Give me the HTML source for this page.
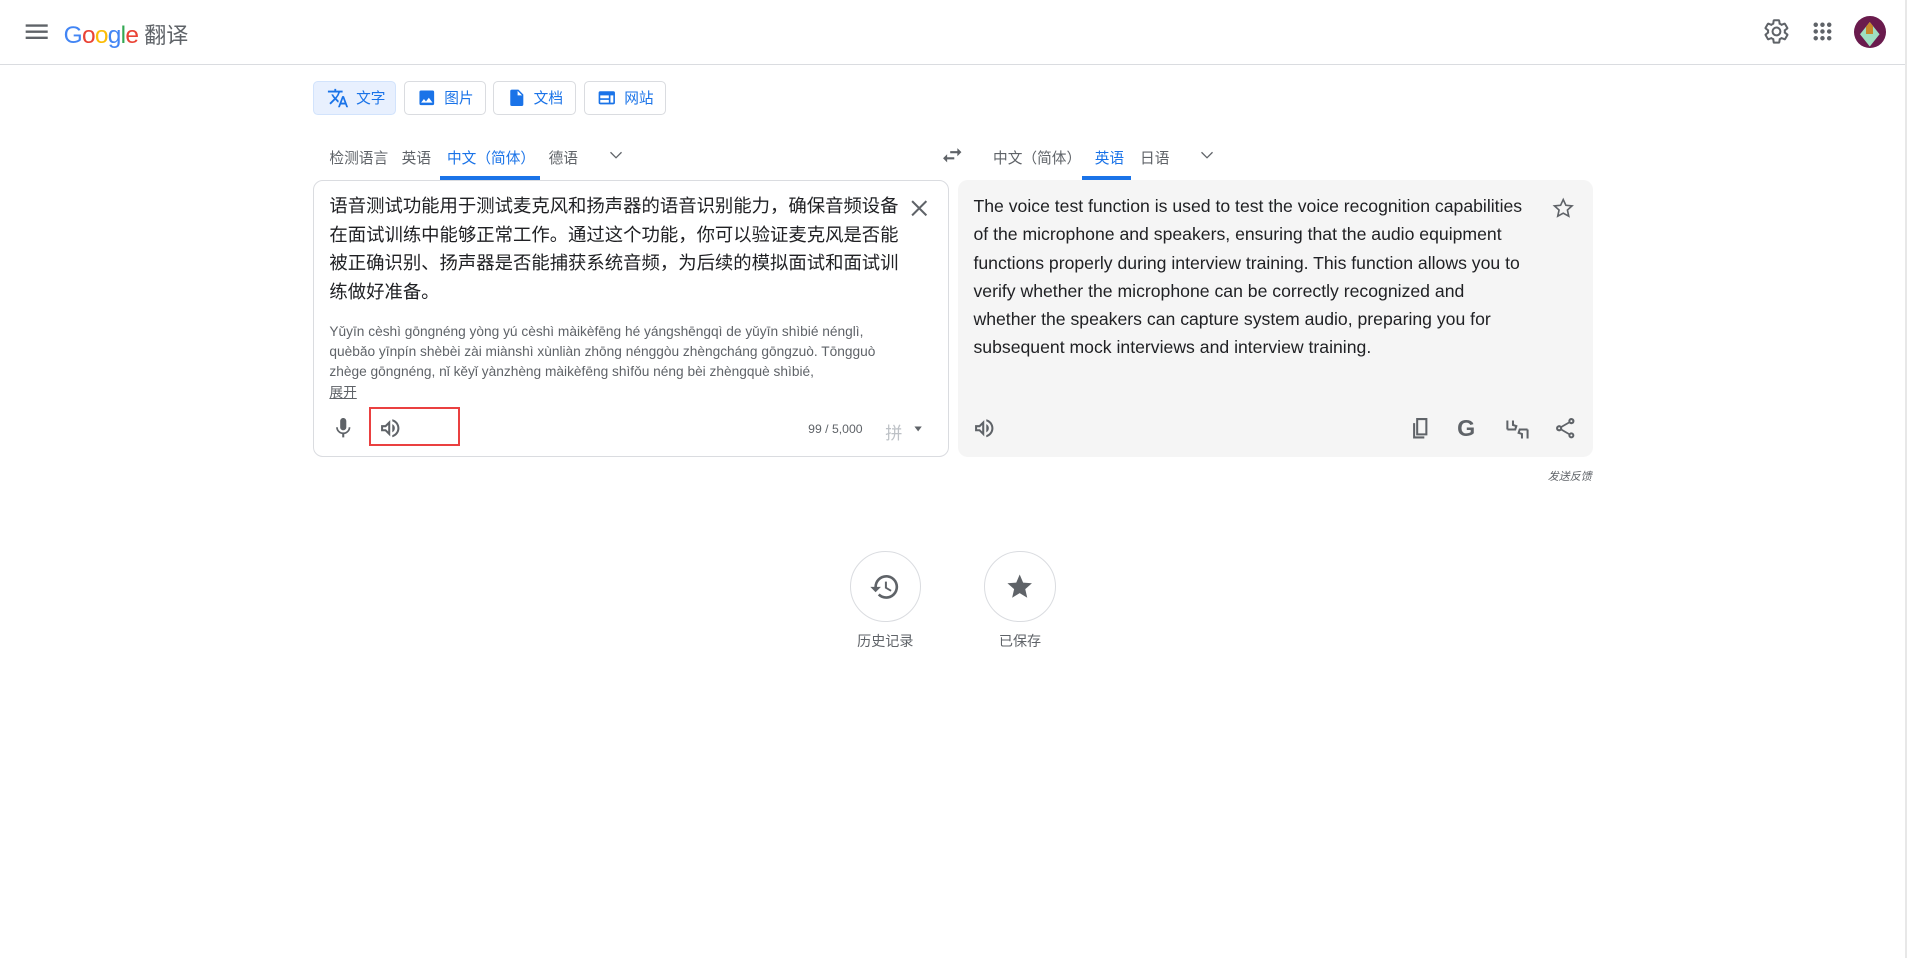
<!DOCTYPE html>
<html><head><meta charset="utf-8"><style>
html{zoom:1.22449}
body{margin:0;width:1568px;height:782px;overflow:hidden;background:#fff;font-family:"Liberation Sans","Noto Sans CJK SC",sans-serif;color:#3c4043;position:relative}
.a{position:absolute}
svg{display:block}
.tab{position:absolute;top:66px;height:28px;border:1px solid #dadce0;border-radius:4px;box-sizing:border-box;font-size:12px;color:#1a73e8;display:flex;align-items:center;padding-left:10px;gap:6px}
.lang{position:absolute;top:120px;font-size:12px;color:#5f6368}
.ic{fill:#5f6368}
</style></head><body>
<div class="a" style="left:0;top:52px;width:1557px;height:1px;background:#dadce0"></div>
<div class="a" style="left:1556px;top:0;width:1px;height:782px;background:#e8e8e8"></div>
<svg class="a" style="left:18px;top:14px" width="24" height="24" viewBox="0 0 24 24"><path class="ic" d="M3 18h18v-2H3v2zm0-5h18v-2H3v2zm0-7v2h18V6H3z"/></svg>
<div class="a" style="left:52px;top:15px;font-size:20px;letter-spacing:-0.6px"><span style="color:#4285f4">G</span><span style="color:#ea4335">o</span><span style="color:#fbbc05">o</span><span style="color:#4285f4">g</span><span style="color:#34a853">l</span><span style="color:#ea4335">e</span> <span style="color:#5f6368;font-size:18px;letter-spacing:0">翻译</span></div>
<svg class="a" style="left:1440px;top:15px" width="22" height="22" viewBox="0 0 24 24"><path d="M19.4 13c.04-.3.06-.6.06-1s-.02-.7-.06-1l2.1-1.6c.2-.15.24-.42.12-.64l-2-3.46c-.12-.22-.39-.3-.6-.22l-2.5 1c-.52-.4-1.080-.73-1.7-.98l-.37-2.650A.49.49 0 0014 2h-4c-.25 0-.46.18-.5.42l-.37 2.65c-.62.25-1.18.59-1.7.98l-2.5-1c-.22-.08-.48 0-.6.22l-2 3.46c-.13.22-.07.49.12.64L4.57 11c-.04.3-.07.65-.07 1s.03.7.07 1l-2.1 1.6c-.2.15-.25.42-.12.64l2 3.46c.12.22.39.3.6.22l2.5-1c.52.4 1.08.73 1.7.98l.37 2.65c.04.24.25.42.5.42h4c.25 0 .46-.18.5-.42l.37-2.65c.62-.25 1.18-.59 1.7-.98l2.5 1c.22.08.48 0 .6-.22l2-3.46c.12-.22.07-.49-.12-.64L19.4 13zM12 15.5A3.5 3.5 0 1112 8.5a3.5 3.5 0 010 7z" fill="none" stroke="#5f6368" stroke-width="1.8"/></svg>
<svg class="a" style="left:1477px;top:15px" width="22" height="22" viewBox="0 0 24 24"><path class="ic" d="M6 8a2 2 0 100-4 2 2 0 000 4zm6 12a2 2 0 100-4 2 2 0 000 4zm-6 0a2 2 0 100-4 2 2 0 000 4zm0-6a2 2 0 100-4 2 2 0 000 4zm6 0a2 2 0 100-4 2 2 0 000 4zm4-8a2 2 0 104 0 2 2 0 00-4 0zm-4 2a2 2 0 100-4 2 2 0 000 4zm6 6a2 2 0 100-4 2 2 0 000 4zm0 6a2 2 0 100-4 2 2 0 000 4z"/></svg>
<div class="a" style="left:1514px;top:13px;width:26px;height:26px;border-radius:50%;background:#6a1b4d;overflow:hidden"><div style="margin:3px 5px;width:16px;height:20px;background:#9fe0c0;clip-path:polygon(50% 0,100% 50%,50% 100%,0 50%)"><div style="margin:5px 5px;width:6px;height:10px;background:#c8892b"></div></div></div>

<div class="tab" style="left:256px;width:67px;background:#e8f0fe;border-color:#d2e3fc"><svg width="18" height="18" viewBox="0 0 24 24"><path fill="#1a73e8" d="M12.87 15.07l-2.54-2.51.03-.03A17.5 17.5 0 0014.07 6H17V4h-7V2H8v2H1v2h11.17C11.5 7.92 10.44 9.75 9 11.35 8.07 10.32 7.3 9.190 6.69 8h-2c.73 1.63 1.73 3.17 2.98 4.56l-5.09 5.02L4 19l5-5 3.11 3.11.76-2.04zM18.5 10h-2L12 22h2l1.12-3h4.75L21 22h2l-4.5-12zm-2.62 7l1.62-4.33L19.12 17h-3.24z"/></svg>文字</div>
<div class="tab" style="left:330px;width:67px"><svg width="16" height="16" viewBox="0 0 24 24"><path fill="#1a73e8" d="M21 19V5a2 2 0 00-2-2H5a2 2 0 00-2 2v14a2 2 0 002 2h14a2 2 0 002-2zM8.5 13.5l2.5 3 3.5-4.5 4.5 6H5l3.5-4.5z"/></svg>图片</div>
<div class="tab" style="left:403px;width:67px"><svg width="16" height="16" viewBox="0 0 24 24"><path fill="#1a73e8" d="M14 2H6a2 2 0 00-2 2v16a2 2 0 002 2h12a2 2 0 002-2V8l-6-6zm-1 7V3.5L18.5 9H13z"/></svg>文档</div>
<div class="tab" style="left:477px;width:67px"><svg width="16" height="16" viewBox="0 0 24 24"><path fill="#1a73e8" d="M20 4H4a2 2 0 00-2 2v12a2 2 0 002 2h16a2 2 0 002-2V6a2 2 0 00-2-2zM4 9h10.5v3.5H4V9zm0 5.5h10.5V18H4v-3.5zM20 18h-3.5V9H20v9z"/></svg>网站</div>

<div class="lang" style="left:269px">检测语言</div>
<div class="lang" style="left:328px">英语</div>
<div class="lang" style="left:365px;color:#1a73e8">中文（简体）</div>
<div class="a" style="left:359px;top:144px;width:82px;height:3px;background:#1a73e8"></div>
<div class="lang" style="left:448px">德语</div>
<svg class="a" style="left:494px;top:118px" width="18" height="18" viewBox="0 0 24 24"><path fill="none" stroke="#5f6368" stroke-width="1.4" d="M6 9l6 6 6-6"/></svg>
<svg class="a" style="left:768px;top:117px" width="20" height="20" viewBox="0 0 24 24"><path class="ic" d="M6.99 11L3 15l3.99 4v-3H14v-2H6.99v-3zM21 9l-3.99-4v3H10v2h7.01v3L21 9z"/></svg>
<div class="lang" style="left:811px">中文（简体）</div>
<div class="lang" style="left:894px;color:#1a73e8">英语</div>
<div class="a" style="left:884px;top:144px;width:40px;height:3px;background:#1a73e8"></div>
<div class="lang" style="left:931px">日语</div>
<svg class="a" style="left:977px;top:118px" width="18" height="18" viewBox="0 0 24 24"><path fill="none" stroke="#5f6368" stroke-width="1.4" d="M6 9l6 6 6-6"/></svg>

<div class="a" style="left:256px;top:147px;width:519px;height:226px;border:1px solid #dadce0;border-radius:8px;box-sizing:border-box"></div>
<div class="a" style="left:269px;top:157px;width:470px;font-size:15px;line-height:23.3px;color:#202124">语音测试功能用于测试麦克风和扬声器的语音识别能力，确保音频设备在面试训练中能够正常工作。通过这个功能，你可以验证麦克风是否能被正确识别、扬声器是否能捕获系统音频，为后续的模拟面试和面试训练做好准备。</div>
<svg class="a" style="left:741px;top:160px" width="20" height="20" viewBox="0 0 24 24"><path fill="none" stroke="#5f6368" stroke-width="2" d="M5 5l14 14M19 5L5 19"/></svg>
<div class="a" style="left:269px;top:263px;width:480px;font-size:11.2px;line-height:16.5px;color:#5f6368">Yǔyīn cèshì gōngnéng yòng yú cèshì màikèfēng hé yángshēngqì de yǔyīn shìbié nénglì,<br>quèbǎo yīnpín shèbèi zài miànshì xùnliàn zhōng nénggòu zhèngcháng gōngzuò. Tōngguò<br>zhège gōngnéng, nǐ kěyǐ yànzhèng màikèfēng shìfǒu néng bèi zhèngquè shìbié,<br><span style="text-decoration:underline">展开</span></div>
<svg class="a" style="left:270px;top:340px" width="20" height="20" viewBox="0 0 24 24"><path class="ic" d="M12 14c1.66 0 3-1.34 3-3V5c0-1.66-1.34-3-3-3S9 3.34 9 5v6c0 1.66 1.34 3 3 3zm5.3-3c0 3-2.54 5.1-5.3 5.1S6.7 14 6.7 11H5c0 3.41 2.72 6.23 6 6.72V21h2v-3.28c3.28-.48 6-3.3 6-6.72h-1.7z"/></svg>
<div class="a" style="left:301px;top:332px;width:75px;height:32px;border:2px solid #ea4040;box-sizing:border-box"></div>
<svg class="a" style="left:309px;top:340px" width="20" height="20" viewBox="0 0 24 24"><path class="ic" d="M3 9v6h4l5 5V4L7 9H3zm2 2h2.8L10 8.8v6.4L7.8 13H5v-2zm11.5 1A4.5 4.5 0 0014 7.97v8.05c1.48-.73 2.5-2.25 2.5-4.02zM14 3.23v2.06c2.89.86 5 3.54 5 6.71s-2.11 5.85-5 6.71v2.06c4.01-.91 7-4.49 7-8.770s-2.99-7.86-7-8.77z"/></svg>
<div class="a" style="left:660px;top:345px;font-size:10px;color:#5f6368">99 / 5,000</div>
<div class="a" style="left:723px;top:342px;font-size:14px;color:#bdc1c6">拼</div>
<svg class="a" style="left:745px;top:346px" width="10" height="8" viewBox="0 0 10 8"><path fill="#5f6368" d="M2 2h6L5 6z"/></svg>

<div class="a" style="left:782px;top:147px;width:519px;height:226px;background:#f5f5f5;border-radius:8px"></div>
<div class="a" style="left:795px;top:157px;width:475px;font-size:14.4px;line-height:23px;color:#202124">The voice test function is used to test the voice recognition capabilities<br>of the microphone and speakers, ensuring that the audio equipment<br>functions properly during interview training. This function allows you to<br>verify whether the microphone can be correctly recognized and<br>whether the speakers can capture system audio, preparing you for<br>subsequent mock interviews and interview training.</div>
<svg class="a" style="left:1267px;top:160px" width="20" height="20" viewBox="0 0 24 24"><path fill="none" stroke="#5f6368" stroke-width="1.6" d="M12 3.5l2.6 5.6 6 .6-4.5 4.1 1.3 6L12 16.8l-5.4 3 1.3-6L3.4 9.7l6-.6z"/></svg>
<svg class="a" style="left:794px;top:340px" width="20" height="20" viewBox="0 0 24 24"><path class="ic" d="M3 9v6h4l5 5V4L7 9H3zm2 2h2.8L10 8.8v6.4L7.8 13H5v-2zm11.5 1A4.5 4.5 0 0014 7.97v8.05c1.48-.73 2.5-2.25 2.5-4.02zM14 3.23v2.06c2.89.86 5 3.54 5 6.71s-2.11 5.85-5 6.71v2.06c4.01-.91 7-4.49 7-8.77s-2.99-7.86-7-8.77z"/></svg>
<svg class="a" style="left:1150px;top:340px" width="20" height="20" viewBox="0 0 24 24"><path fill="none" stroke="#5f6368" stroke-width="2" d="M9 3h9v15H9zM6 7v14h10"/></svg>
<div class="a" style="left:1190px;top:339px;font-size:19px;font-weight:bold;color:#5f6368">G</div>
<svg class="a" style="left:1228px;top:340px" width="22" height="22" viewBox="0 0 24 24"><path fill="none" stroke="#5f6368" stroke-width="1.8" d="M3 12V4M3 12h7l1-3-3-1V4M21 12v8M21 12h-7l-1 3 3 1v4"/></svg>
<svg class="a" style="left:1268px;top:340px" width="20" height="20" viewBox="0 0 24 24"><path class="ic" d="M18 16.08c-.76 0-1.44.3-1.96.77L8.91 12.7c.05-.23.09-.46.09-.7s-.04-.47-.09-.7l7.05-4.11A2.99 2.99 0 0021 5a3 3 0 10-5.91.7L8.04 9.81A3 3 0 003 12a3 3 0 005.04 2.19l7.12 4.16c-.05.21-.08.43-.08.65A2.92 2.92 0 1018 16.08zM18 4a1 1 0 110 2 1 1 0 010-2zM6 13a1 1 0 110-2 1 1 0 010 2zm12 7.02a1 1 0 110-2 1 1 0 010 2z"/></svg>
<div class="a" style="left:1240px;top:382px;width:60px;text-align:right;font-size:9px;font-style:italic;color:#5f6368">发送反馈</div>

<div class="a" style="left:694px;top:450px;width:58px;height:58px;border:1px solid #dadce0;border-radius:50%;box-sizing:border-box"></div>
<svg class="a" style="left:710px;top:466px" width="26" height="26" viewBox="0 0 24 24"><path class="ic" d="M13 3a9 9 0 00-9 9H1l3.89 3.89.07.14L9 12H6c0-3.87 3.13-7 7-7s7 3.13 7 7-3.13 7-7 7c-1.93 0-3.68-.79-4.94-2.06l-1.42 1.42A8.95 8.95 0 0013 21a9 9 0 000-18zm-1 5v5l4.28 2.54.72-1.21-3.5-2.08V8H12z"/></svg>
<div class="a" style="left:684px;top:515px;width:78px;text-align:center;font-size:11.5px;color:#5f6368">历史记录</div>
<div class="a" style="left:804px;top:450px;width:58px;height:58px;border:1px solid #dadce0;border-radius:50%;box-sizing:border-box"></div>
<svg class="a" style="left:821px;top:467px" width="24" height="24" viewBox="0 0 24 24"><path class="ic" d="M12 17.27L18.18 21l-1.64-7.03L22 9.24l-7.19-.61L12 2 9.19 8.63 2 9.24l5.46 4.73L5.82 21z"/></svg>
<div class="a" style="left:794px;top:515px;width:78px;text-align:center;font-size:11.5px;color:#5f6368">已保存</div>
</body></html>
